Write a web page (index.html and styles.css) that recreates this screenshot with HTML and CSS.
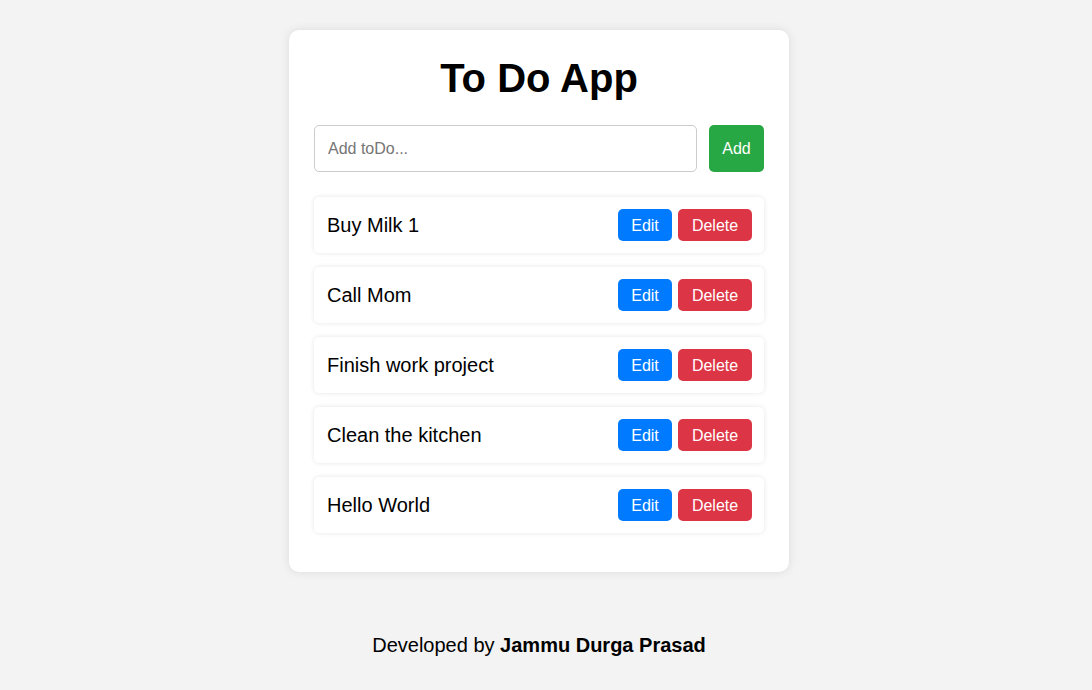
FILE: index.html
```html
<!DOCTYPE html>
<html lang="en">
<head>
<meta charset="utf-8">
<title>To Do App</title>
<link rel="stylesheet" href="styles.css">
</head>
<body>
<main class="page">
  <section class="card">
    <h1 class="title">To Do App</h1>
    <div class="add-row">
      <input class="todo-input" type="text" placeholder="Add toDo...">
      <button class="btn btn-add">Add</button>
    </div>
    <ul class="todo-list">
      <li class="todo-item"><span class="todo-text">Buy Milk 1</span><div class="actions"><button class="btn btn-edit">Edit</button><button class="btn btn-delete">Delete</button></div></li>
      <li class="todo-item"><span class="todo-text">Call Mom</span><div class="actions"><button class="btn btn-edit">Edit</button><button class="btn btn-delete">Delete</button></div></li>
      <li class="todo-item"><span class="todo-text">Finish work project</span><div class="actions"><button class="btn btn-edit">Edit</button><button class="btn btn-delete">Delete</button></div></li>
      <li class="todo-item"><span class="todo-text">Clean the kitchen</span><div class="actions"><button class="btn btn-edit">Edit</button><button class="btn btn-delete">Delete</button></div></li>
      <li class="todo-item"><span class="todo-text">Hello World</span><div class="actions"><button class="btn btn-edit">Edit</button><button class="btn btn-delete">Delete</button></div></li>
    </ul>
  </section>
  <footer class="footer">Developed by <strong>Jammu Durga Prasad</strong></footer>
</main>
</body>
</html>
```
FILE: styles.css
```css
* { box-sizing: border-box; }
html, body { margin: 0; padding: 0; }
body {
  background: #f3f3f3;
  font-family: "Liberation Sans", Arial, sans-serif;
  color: #000;
}
.page {
  display: flex;
  flex-direction: column;
  align-items: center;
  padding: 30px 14px 0 0;
}
.card {
  width: 500px;
  background: #fff;
  border-radius: 10px;
  padding: 25px;
  box-shadow: 0 0 10px rgba(0, 0, 0, 0.1);
}
.title {
  margin: 0 0 24px;
  font-size: 40px;
  font-weight: bold;
  text-align: center;
  line-height: 46px;
}
.add-row {
  display: flex;
  gap: 12px;
  margin-bottom: 25px;
}
.todo-input {
  flex: 1;
  height: 47px;
  border: 1px solid #ccc;
  border-radius: 5px;
  padding: 0 13px;
  font-family: inherit;
  font-size: 16px;
  color: #000;
  outline: none;
}
.todo-input::placeholder { color: #757575; }
.btn {
  border: none;
  border-radius: 5px;
  color: #fff;
  font-family: inherit;
  font-size: 16px;
  cursor: pointer;
}
.btn-add {
  width: 55px;
  height: 47px;
  padding: 0;
  background: #28a745;
}
.todo-list {
  list-style: none;
  margin: 0;
  padding: 0;
}
.todo-item {
  display: flex;
  align-items: center;
  justify-content: space-between;
  height: 56px;
  padding: 0 12px 0 13px;
  margin-bottom: 14px;
  background: #fff;
  border-radius: 5px;
  box-shadow: 0 0 5px rgba(0, 0, 0, 0.1);
}
.todo-text { font-size: 20px; }
.actions {
  display: flex;
  gap: 6px;
}
.btn-edit, .btn-delete {
  height: 32px;
  padding: 1px 0 0;
}
.btn-edit { background: #007bff; width: 54px; }
.btn-delete { background: #dc3545; width: 74px; }
.footer {
  margin-top: 62px;
  font-size: 20px;
  line-height: 23px;
}
```
